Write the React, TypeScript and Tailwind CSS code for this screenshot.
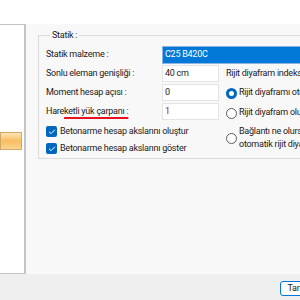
import { Check } from "lucide-react";

const Field = ({ label, value, tone }: { label: React.ReactNode; value: string; tone?: string }) => (
  <div className="flex h-[19px] items-center">
    <span className="w-[116px] shrink-0">{label}</span>
    <div
      className={`flex h-[17px] w-[57px] items-center border border-[#e4e4e4] bg-white px-[2px] ${tone ?? ""}`}
    >
      {value}
    </div>
  </div>
);

const Tick = ({ label }: { label: string }) => (
  <div className="flex h-[17px] items-center gap-[3px]">
    <span className="flex h-[11px] w-[11px] items-center justify-center rounded-[2px] bg-[#0067c0]">
      <Check size={8} strokeWidth={3} color="white" />
    </span>
    <span className="whitespace-nowrap">{label}</span>
  </div>
);

const Radio = ({ on, children }: { on?: boolean; children: React.ReactNode }) => (
  <div className="flex items-center gap-[2px] whitespace-nowrap">
    {on ? (
      <span className="flex h-[11px] w-[11px] shrink-0 items-center justify-center rounded-full bg-[#0067c0]">
        <span className="h-[5px] w-[5px] rounded-full bg-white" />
      </span>
    ) : (
      <span className="h-[11px] w-[11px] shrink-0 rounded-full border border-[#5c5c5c] bg-white" />
    )}
    <span>{children}</span>
  </div>
);

export default function App() {
  return (
    <div className="flex h-[300px] w-[300px] flex-col overflow-hidden bg-white font-['Roboto',sans-serif] text-[9px] tracking-[-0.25px] text-[#1a1a1a]">
      <div className="h-[24px] shrink-0 bg-white" />

      <div className="flex h-[250px] shrink-0">
        <div className="flex w-[26px] shrink-0 flex-col border-t border-r-2 border-b border-[#c4c4c4] bg-white pt-[107px]">
          <div className="h-[18px] w-[22px] border border-[#d0a868] bg-gradient-to-b from-[#fde4b8] via-[#f8bd5c] to-[#fcd591]" />
        </div>

        <div className="flex-1 overflow-hidden bg-[#f8f8f8] pt-[4px] pl-[12px]">
          <fieldset className="w-[320px] border border-[#dcdcdc] pt-[3px] pr-0 pb-[1px] pl-[7px]">
            <legend className="ml-[4px] px-[2px] leading-[14px]">Statik :</legend>

            <div className="flex h-[19px] items-center">
              <span className="w-[116px] shrink-0">Statik malzeme :</span>
              <div className="flex h-[18px] flex-1 items-center border border-[#8fb4dd] bg-[#0078d7] px-[2px] text-white">
                C25 B420C
              </div>
            </div>

            <div className="flex gap-[7px]">
              <div className="flex w-[173px] shrink-0 flex-col">
                <Field label="Sonlu eleman genişliği :" value="40 cm" />
                <Field label="Moment hesap açısı :" value="0" />
                <Field
                  label={
                    <>
                      Hare
                      <span className="underline decoration-[#e81123] decoration-2 underline-offset-[3px]">
                        ketli yük çarpanı :
                      </span>
                    </>
                  }
                  value="1"
                  tone="text-[#7a1f6e]"
                />
                <div className="mt-[2px] flex flex-col">
                  <Tick label="Betonarme hesap akslarını oluştur" />
                  <Tick label="Betonarme hesap akslarını göster" />
                </div>
              </div>

              <div className="flex flex-col">
                <div className="flex h-[19px] items-center whitespace-nowrap">Rijit diyafram indeksi</div>
                <div className="flex h-[20px] items-center">
                  <Radio on>Rijit diyaframı otomatik oluştur</Radio>
                </div>
                <div className="flex h-[20px] items-center">
                  <Radio>Rijit diyafram oluştur</Radio>
                </div>
                <div className="flex items-center gap-[2px] whitespace-nowrap pt-[2px]">
                  <span className="h-[11px] w-[11px] shrink-0 rounded-full border border-[#5c5c5c] bg-white" />
                  <span className="leading-[13px]">
                    Bağlantı ne olursa olsun
                    <br />
                    otomatik rijit diyafram oluştur
                  </span>
                </div>
              </div>
            </div>
          </fieldset>
        </div>
      </div>

      <div className="flex flex-1 items-start justify-end bg-[#efefef] pt-[7px]">
        <button
          type="button"
          className="-mr-[24px] flex h-[15px] w-[44px] items-center justify-center rounded-[3px] border border-[#0078d7] bg-white"
        >
          Tamam
        </button>
      </div>
    </div>
  );
}
